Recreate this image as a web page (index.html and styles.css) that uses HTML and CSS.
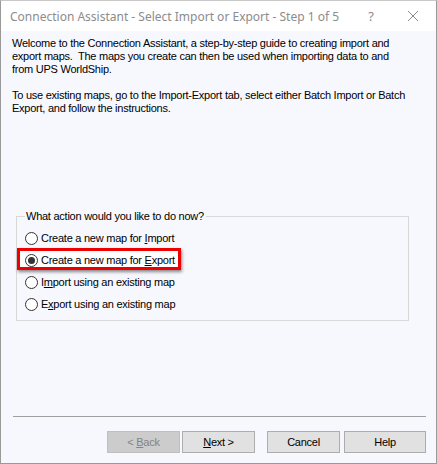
FILE: index.html
```html
<!DOCTYPE html>
<html>
<head>
<meta charset="utf-8">
<link rel="stylesheet" href="styles.css">
</head>
<body>
<div class="window">
  <div class="titlebar">
    <span class="title">Connection Assistant - Select Import or Export - Step 1 of 5</span>
    <span class="tb-help">?</span>
    <span class="tb-close">
      <svg width="12" height="12" viewBox="0 0 12 12"><path d="M1 1L11 11M11 1L1 11" stroke="#8a8a8a" stroke-width="1" fill="none"/></svg>
    </span>
  </div>
  <div class="body">
    <p class="intro">Welcome to the Connection Assistant, a step-by-step guide to creating import and export maps.&nbsp; The maps you create can then be used when importing data to and from UPS WorldShip.</p>
    <p class="intro">To use existing maps, go to the Import-Export tab, select either Batch Import or Batch Export, and follow the instructions.</p>
    <fieldset class="group">
      <legend>What action would you like to do now?</legend>
      <div class="opt"><span class="radio"></span><span>Create a new map for <u>I</u>mport</span></div>
      <div class="opt highlight"><span class="radio checked"></span><span>Create a new map for <u>E</u>xport</span></div>
      <div class="opt"><span class="radio"></span><span>I<u>m</u>port using an existing map</span></div>
      <div class="opt"><span class="radio"></span><span>E<u>x</u>port using an existing map</span></div>
    </fieldset>
    <div class="spacer"></div>
    <div class="sep"></div>
    <div class="buttons">
      <button class="btn disabled">&lt; <u>B</u>ack</button>
      <button class="btn"><u>N</u>ext &gt;</button>
      <button class="btn gap">Cancel</button>
      <button class="btn help">Help</button>
    </div>
  </div>
</div>
</body>
</html>
```
FILE: styles.css
```css
html, body { margin: 0; padding: 0; }
body { width: 437px; height: 464px; overflow: hidden; background: #ffffff; }
.window {
  box-sizing: border-box;
  width: 437px; height: 464px;
  border: 1px solid #9a9a9a;
  border-top: 1px solid #c8c8c8;
  display: flex; flex-direction: column;
  background: #f7f7fe;
}
.titlebar {
  height: 30px; background: #ffffff;
  display: flex; align-items: center;
  font-family: "Noto Sans", "Open Sans", sans-serif;
  font-size: 12px; color: #8c8c8c;
  flex: none;
}
.title { padding-left: 9px; flex: 1; white-space: nowrap; }
.tb-help { width: 20px; text-align: center; font-size: 13px; margin-right: 26px; margin-left: -3px; }
.tb-close { width: 12px; height: 12px; margin-right: 17px; display: flex; }
.body {
  flex: 1; display: flex; flex-direction: column;
  font-family: "Liberation Sans", Arial, sans-serif;
  font-size: 11px; line-height: 13px; color: #000;
  letter-spacing: -0.25px;
  padding: 6px 10px 10px 11px;
}
.intro { margin: 0 14px 13px 0; }
.group {
  margin: 82px 17px 0 4px;
  border: 1px solid #d8d8d8;
  padding: 4px 0 5px 8px;
}
.group legend { padding: 0 2px 0 1px; margin-left: 0; }
.opt {
  display: flex; align-items: center; height: 22px;
  position: relative;
}
.opt .radio {
  box-sizing: border-box;
  width: 13px; height: 13px; border-radius: 50%;
  border: 1px solid #333; background: #fff;
  margin-right: 3px; flex: none; position: relative;
}
.opt .radio.checked::after {
  content: ""; position: absolute; left: 2px; top: 2px;
  width: 7px; height: 7px; border-radius: 50%; background: #333;
}
.highlight::before {
  content: ""; position: absolute;
  left: -8px; top: -1px; width: 158px; height: 16px;
  border: 3px solid #ee0000;
  background: #ffffff;
  box-shadow: 1px 2px 3px rgba(0,0,0,0.45);
  z-index: 0;
}
.highlight > * { position: relative; z-index: 1; }
.spacer { flex: 1; }
.sep { height: 1px; background: #a0a0a0; margin: 0 0 14px 1px; }
.buttons { display: flex; justify-content: flex-end; padding-right: 0; }
.btn {
  box-sizing: border-box;
  width: 73px; height: 22px; margin: 0 0 0 2px; padding: 0;
  font-family: "Liberation Sans", Arial, sans-serif; font-size: 11px;
  letter-spacing: -0.25px;
  background: #e1e1e1; border: 1px solid #adadad; color: #000;
}
.btn.disabled { background: #cccccc; border-color: #bfbfbf; color: #838383; }
.btn.gap { margin-left: 12px; }
.btn.help { width: 82px; margin-left: 4px; }
```
